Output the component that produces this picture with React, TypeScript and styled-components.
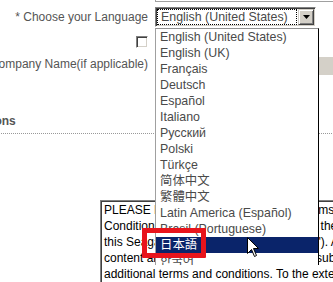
import React from "react";
import styled, { createGlobalStyle } from "styled-components";

const GlobalStyle = createGlobalStyle`
  html, body {
    margin: 0;
    padding: 0;
    background: #fff;
  }
  body {
    font-family: "Liberation Sans", Arial, "Noto Sans CJK SC", sans-serif;
  }
`;

const Page = styled.div`
  position: relative;
  width: 333px;
  height: 282px;
  overflow: hidden;
  background: #fff;
`;

// the form is scrolled a little to the left, so its start is cut off
const Sheet = styled.div`
  margin-left: -120px;
  width: 520px;
`;

const FormRow = styled.div<{ $top: number; $height: number }>`
  display: grid;
  grid-template-columns: 268px 200px;
  column-gap: 7px;
  margin-top: ${({ $top }) => $top}px;
  height: ${({ $height }) => $height}px;
`;

const Label = styled.label<{ $align?: "start" | "center" }>`
  justify-self: end;
  align-self: ${({ $align }) => ($align === "start" ? "start" : "center")};
  font-size: 12px;
  color: #555;
  white-space: nowrap;
`;

const PrevField = styled.div`
  grid-column: 2;
  height: 1px;
  border-left: 1px solid #a0a0a0;
  border-bottom: 1px solid #a0a0a0;
`;

const SelectWrap = styled.div`
  position: relative;
  width: 161px;
  height: 20px;
`;

const SelectBox = styled.div`
  box-sizing: border-box;
  display: flex;
  height: 20px;
  padding: 1px;
  background: #fff;
  border: 1px solid;
  border-color: #808080 #fff #fff #808080;
  box-shadow: inset 1px 1px 0 #404040, inset -1px -1px 0 #d4d0c8;
`;

const SelectValue = styled.div`
  flex: 1;
  box-sizing: border-box;
  margin-right: 1px;
  padding-left: 3px;
  border: 1px dotted #000;
  font-size: 12.4px;
  line-height: 14px;
  color: #4a4a4a;
  white-space: nowrap;
  overflow: hidden;
`;

const ArrowButton = styled.div`
  box-sizing: border-box;
  width: 16px;
  height: 16px;
  display: flex;
  align-items: center;
  justify-content: center;
  background: #d4d0c8;
  border: 1px solid;
  border-color: #d4d0c8 #404040 #404040 #d4d0c8;
  box-shadow: inset 1px 1px 0 #fff, inset -1px -1px 0 #808080;
`;

const ListBox = styled.ul`
  position: absolute;
  top: 21px;
  left: 0;
  z-index: 2;
  box-sizing: border-box;
  width: 164px;
  height: 237px;
  margin: 0;
  padding: 0;
  list-style: none;
  overflow: hidden;
  background: #fff;
  border-top: 1px solid #909090;
  border-left: 1px solid #a0a0a0;
  border-right: 1px solid #000;
`;

const Option = styled.li<{ $selected?: boolean }>`
  height: 16px;
  padding-left: 4px;
  font-size: 12.4px;
  line-height: 16px;
  white-space: nowrap;
  color: ${({ $selected }) => ($selected ? "#fff" : "#4a4a4a")};
  background: ${({ $selected }) => ($selected ? "#0a246a" : "transparent")};
`;

const Checkbox = styled.span`
  align-self: center;
  justify-self: end;
  box-sizing: border-box;
  width: 12px;
  height: 12px;
  background: #fff;
  border: 1px solid;
  border-color: #808080 #fff #fff #808080;
  box-shadow: inset 1px 1px 0 #404040, inset -1px -1px 0 #d4d0c8;
`;

const GrayField = styled.div`
  height: 18px;
  background: #d4d0c8;
`;

const SectionTitle = styled.h3`
  margin: 38px 0 0;
  padding: 0 0 4px 10px;
  font-size: 12px;
  line-height: 16px;
  font-weight: bold;
  color: #555;
  border-bottom: 1px dotted #999;
`;

const TermsBody = styled.div`
  margin-top: 66px;
  padding-left: 220px;
`;

const TermsText = styled.textarea`
  display: block;
  box-sizing: border-box;
  width: 320px;
  height: 90px;
  margin: 0;
  padding: 1px 3px 0;
  resize: none;
  overflow: hidden;
  white-space: pre;
  font-family: "Liberation Sans", Arial, sans-serif;
  font-size: 12px;
  line-height: 16px;
  color: #000;
  background: #fff;
  border: 1px solid;
  border-color: #808080 #fff #fff #808080;
  box-shadow: inset 1px 1px 0 #404040;
  outline: none;
`;

const Highlight = styled.div`
  position: absolute;
  left: 142px;
  top: 228px;
  z-index: 3;
  box-sizing: border-box;
  width: 64px;
  height: 30px;
  border: 5px solid #e8141c;
  border-radius: 1px;
`;

const Pointer = styled.svg`
  position: absolute;
  left: 247px;
  top: 237px;
  z-index: 4;
`;

const languages = [
  "English (United States)",
  "English (UK)",
  "Français",
  "Deutsch",
  "Español",
  "Italiano",
  "Русский",
  "Polski",
  "Türkçe",
  "简体中文",
  "繁體中文",
  "Latin America (Español)",
  "Brasil (Portuguese)",
  "日本語",
  "한국어",
];

const terms = [
  "PLEASE READ THESE SEAGATE\u00ae Terms: These Terms and",
  'Conditions of Use (the "Terms") governs the use of',
  'this Seagate Technology Web site ("Site"). All',
  "content and services on this Site are all subject to",
  "additional terms and conditions. To the extent that",
].join("\n");

export default function App() {
  return (
    <Page>
      <GlobalStyle />
      <Sheet>
        <FormRow $top={0} $height={2}>
          <PrevField />
        </FormRow>

        <FormRow $top={5} $height={20}>
          <Label>* Choose your Language</Label>
          <SelectWrap>
            <SelectBox>
              <SelectValue>English (United States)</SelectValue>
              <ArrowButton>
                <svg width="7" height="4" viewBox="0 0 7 4">
                  <polygon points="0,0 7,0 3.5,4" fill="#000" />
                </svg>
              </ArrowButton>
            </SelectBox>
            <ListBox>
              {languages.map((lang) => (
                <Option key={lang} $selected={lang === "日本語"}>
                  {lang}
                </Option>
              ))}
            </ListBox>
          </SelectWrap>
        </FormRow>

        <FormRow $top={9} $height={12}>
          <Checkbox />
        </FormRow>

        <FormRow $top={9} $height={18}>
          <Label $align="start">Company Name(if applicable)</Label>
          <GrayField />
        </FormRow>

        <SectionTitle>Terms and Conditions</SectionTitle>

        <TermsBody>
          <TermsText readOnly wrap="off" defaultValue={terms} />
        </TermsBody>
      </Sheet>

      <Highlight />
      <Pointer width="13" height="21" viewBox="0 0 13 21">
        <path
          d="M0.5 0.5 L0.5 16.5 L4.5 12.5 L7.5 19.5 L9.5 18.5 L6.5 11.5 L11.5 11.5 Z"
          fill="#fff"
          stroke="#000"
          strokeWidth="1"
          strokeLinejoin="miter"
        />
      </Pointer>
    </Page>
  );
}
